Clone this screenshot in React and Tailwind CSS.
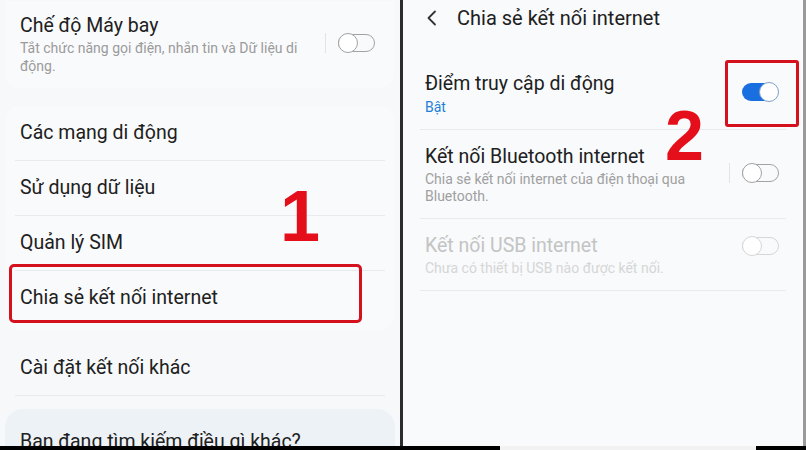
import React from "react";

const font = { fontFamily: "Roboto, 'Noto Sans', sans-serif" };

function Toggle({ on = false, disabled = false }) {
  if (on) {
    return (
      <div className="relative w-[37px] h-[20px]">
        <div className="absolute left-0 top-[1px] w-[34px] h-[18px] rounded-full bg-[#1a6fe0]" />
        <div className="absolute right-0 top-0 w-[20px] h-[20px] rounded-full bg-white border-[1.5px] border-[#7f9fc8]" />
      </div>
    );
  }
  const c = disabled ? "border-[#d6d6d6]" : "border-[#a3a3a3]";
  return (
    <div className="relative w-[37px] h-[20px]">
      <div className={`absolute left-0 top-[1px] w-[37px] h-[18px] rounded-full border-[1.5px] ${c}`} />
      <div className={`absolute left-0 top-0 w-[20px] h-[20px] rounded-full bg-white border-[1.5px] ${c}`} />
    </div>
  );
}

function Sep({ cls = "" }) {
  return <div className={`h-px shrink-0 bg-[#e8ebee] ${cls}`} />;
}

function Row({ text }) {
  return (
    <div className="h-[54px] shrink-0 flex items-center pl-[20px] text-[19.5px] text-[#202020]">
      {text}
    </div>
  );
}

export default function App() {
  return (
    <div className="relative w-[806px] h-[450px] overflow-hidden bg-black flex flex-col" style={font}>
      <div className="h-[446px] shrink-0 flex">
        {/* Left panel */}
        <div className="w-[400px] h-full bg-[#f6f8fa] flex flex-col relative overflow-hidden">
          <div className="h-px shrink-0 bg-[#f6f8fa]" />
          {/* Airplane card */}
          <div className="h-[87px] shrink-0 mx-[6px] rounded-b-[14px] bg-[#f9fafb] flex">
            <div className="pl-[14px] pt-[13px] w-[300px]">
              <div className="text-[19.5px] leading-[24px] text-[#202020]">Chế độ Máy bay</div>
              <div className="text-[14px] leading-[18px] text-[#9b9b9b] mt-[1px]">
                Tắt chức năng gọi điện, nhắn tin và Dữ liệu di động.
              </div>
            </div>
            <div className="flex items-start pt-[32px] ml-[19px] gap-[12px]">
              <div className="w-px h-[20px] bg-[#e4e4e4]" />
              <Toggle />
            </div>
          </div>
          {/* List card */}
          <div className="shrink-0 mt-[18px] mx-[6px] rounded-[14px] bg-[#f9fafb] pb-[5px]">
            <div className="-mx-[6px] flex flex-col">
              <Row text="Các mạng di động" />
              <Sep cls="mx-[15px]" />
              <Row text="Sử dụng dữ liệu" />
              <Sep cls="mx-[15px]" />
              <Row text="Quản lý SIM" />
              <Sep cls="mx-[15px]" />
              <Row text="Chia sẻ kết nối internet" />
            </div>
          </div>
          <div className="shrink-0 mt-[11px] flex flex-col">
            <Row text="Cài đặt kết nối khác" />
            <Sep cls="mx-[15px]" />
          </div>
          <div className="shrink-0 h-[60px] mt-[13px] mx-[5px] rounded-t-[18px] bg-[#edf2f7] pl-[15px] pt-[21px] text-[19.5px] leading-[24px] text-[#202020] whitespace-nowrap">
            Bạn đang tìm kiếm điều gì khác?
          </div>
        </div>

        {/* Divider */}
        <div className="w-[3px] h-full bg-[#2c2c2c]" />

        {/* Right panel */}
        <div className="flex-1 h-full bg-[#f8fafc] border-r-[3px] border-[#9a9a9a] flex flex-col">
          <div className="h-[36px] shrink-0 flex items-center pl-[23px]">
            <svg width="11" height="16" viewBox="0 0 11 16" className="mr-[20px]">
              <path d="M9 1.5 L2.5 8 L9 14.5" fill="none" stroke="#333" strokeWidth="1.8" strokeLinecap="round" strokeLinejoin="round" />
            </svg>
            <span className="text-[20px] text-[#202020]">Chia sẻ kết nối internet</span>
          </div>
          <div className="mt-[26px] mx-[15px] flex flex-col">
            {/* Row 1 */}
            <div className="h-[67px] shrink-0 flex">
              <div className="flex-1 pl-[7px] pt-[11px]">
                <div className="text-[19.5px] leading-[22px] text-[#202020]">Điểm truy cập di động</div>
                <div className="text-[14px] leading-[18px] text-[#1e80d6] mt-[3px]">Bật</div>
              </div>
              <div className="pt-[20px] pr-[9px]">
                <Toggle on />
              </div>
            </div>
            <Sep cls="mx-[2px]" />
            {/* Row 2 */}
            <div className="h-[88px] shrink-0 flex">
              <div className="pl-[7px] pt-[16px] w-[295px]">
                <div className="text-[19.5px] leading-[22px] text-[#202020]">Kết nối Bluetooth internet</div>
                <div className="text-[14px] leading-[17px] text-[#a0a0a0] mt-[3px]">
                  Chia sẻ kết nối internet của điện thoại qua Bluetooth.
                </div>
              </div>
              <div className="flex-1 flex justify-end items-start pt-[33px] pr-[9px] gap-[12px]">
                <div className="w-px h-[20px] bg-[#e4e4e4]" />
                <Toggle />
              </div>
            </div>
            <Sep cls="mx-[2px]" />
            {/* Row 3 */}
            <div className="h-[71px] shrink-0 flex">
              <div className="flex-1 pl-[7px] pt-[16px]">
                <div className="text-[19.5px] leading-[22px] text-[#c4c4c4]">Kết nối USB internet</div>
                <div className="text-[14px] leading-[17px] text-[#d6d6d6] mt-[3px]">Chưa có thiết bị USB nào được kết nối.</div>
              </div>
              <div className="pt-[17px] pr-[9px]">
                <Toggle disabled />
              </div>
            </div>
            <Sep cls="mx-[2px]" />
          </div>
        </div>
      </div>
      <div className="h-[4px] shrink-0 flex">
        <div className="w-[500px] bg-black" />
        <div className="w-[256px] bg-[#f2f2f2]" />
        <div className="flex-1 bg-black" />
      </div>

      {/* Annotations */}
      <div className="absolute left-[9px] top-[264px] w-[353px] h-[59px] border-[3px] border-[#d4111d] rounded-[5px]" />
      <div className="absolute left-[725px] top-[60px] w-[74px] h-[67px] border-[3px] border-[#d4111d] rounded-[3px]" />
      <div
        className="absolute left-[280px] top-[180px] text-[72px] leading-none font-bold text-[#e50f1c]"
        style={{ fontFamily: "'Liberation Sans', Arial, sans-serif" }}
      >
        1
      </div>
      <div
        className="absolute left-[665px] top-[101px] text-[70px] leading-none font-bold text-[#e50f1c]"
        style={{ fontFamily: "'Liberation Sans', Arial, sans-serif" }}
      >
        2
      </div>
    </div>
  );
}
